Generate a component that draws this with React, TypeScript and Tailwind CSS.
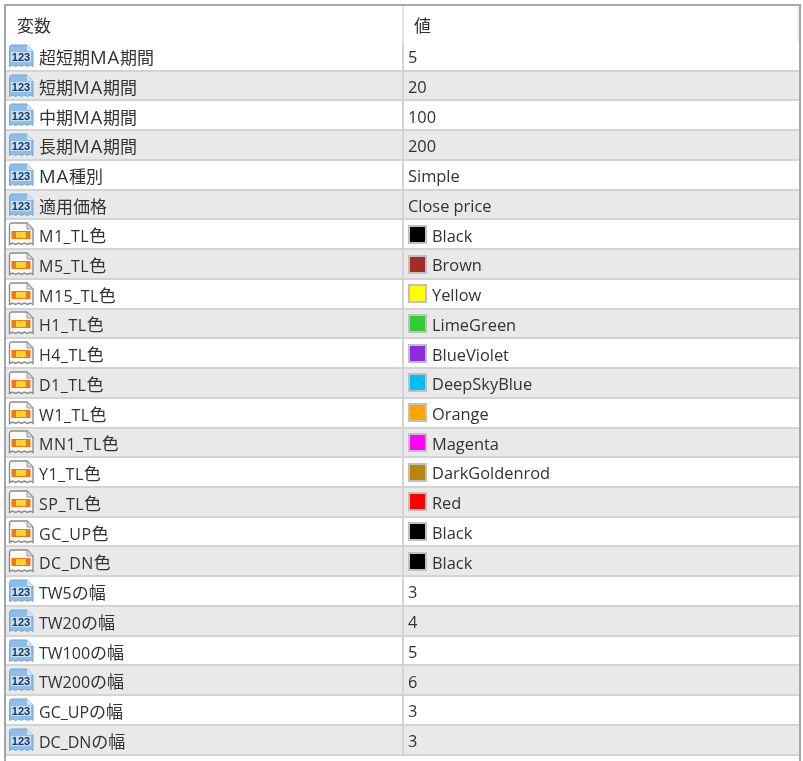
const FONT = "font-['Open_Sans','Noto_Sans_CJK_JP',sans-serif]";

type Row = { name: string; value: string; kind: "num" | "color"; swatch?: string };

const rows: Row[] = [
  { name: "超短期MA期間", value: "5", kind: "num" },
  { name: "短期MA期間", value: "20", kind: "num" },
  { name: "中期MA期間", value: "100", kind: "num" },
  { name: "長期MA期間", value: "200", kind: "num" },
  { name: "MA種別", value: "Simple", kind: "num" },
  { name: "適用価格", value: "Close price", kind: "num" },
  { name: "M1_TL色", value: "Black", kind: "color", swatch: "bg-[#000000]" },
  { name: "M5_TL色", value: "Brown", kind: "color", swatch: "bg-[#a52a2a]" },
  { name: "M15_TL色", value: "Yellow", kind: "color", swatch: "bg-[#ffff00]" },
  { name: "H1_TL色", value: "LimeGreen", kind: "color", swatch: "bg-[#32cd32]" },
  { name: "H4_TL色", value: "BlueViolet", kind: "color", swatch: "bg-[#8a2be2]" },
  { name: "D1_TL色", value: "DeepSkyBlue", kind: "color", swatch: "bg-[#00bfff]" },
  { name: "W1_TL色", value: "Orange", kind: "color", swatch: "bg-[#ffa500]" },
  { name: "MN1_TL色", value: "Magenta", kind: "color", swatch: "bg-[#ff00ff]" },
  { name: "Y1_TL色", value: "DarkGoldenrod", kind: "color", swatch: "bg-[#b8860b]" },
  { name: "SP_TL色", value: "Red", kind: "color", swatch: "bg-[#ff0000]" },
  { name: "GC_UP色", value: "Black", kind: "color", swatch: "bg-[#000000]" },
  { name: "DC_DN色", value: "Black", kind: "color", swatch: "bg-[#000000]" },
  { name: "TW5の幅", value: "3", kind: "num" },
  { name: "TW20の幅", value: "4", kind: "num" },
  { name: "TW100の幅", value: "5", kind: "num" },
  { name: "TW200の幅", value: "6", kind: "num" },
  { name: "GC_UPの幅", value: "3", kind: "num" },
  { name: "DC_DNの幅", value: "3", kind: "num" },
];

// CJK runs sit a little larger than the latin text in the reference,
// and the latin runs are not all equally wide there
function latinClass(part: string, whole: string) {
  if (part === "MA") return "text-[18.5px] tracking-[0.8px]";
  if (whole.endsWith("色")) return "tracking-[0.5px]";
  return "";
}

function Name({ text }: { text: string }) {
  const parts = text.match(/[A-Za-z0-9_]+|[^A-Za-z0-9_]+/g) ?? [];
  return (
    <span className="pt-[3px] text-[16px] leading-none whitespace-nowrap text-[#333333]">
      {parts.map((part, i) =>
        /^[A-Za-z0-9_]/.test(part) ? (
          <span key={i} className={latinClass(part, text)}>
            {part}
          </span>
        ) : (
          <span key={i} className="text-[17px]">
            {part}
          </span>
        ),
      )}
    </span>
  );
}

function NumIcon() {
  return (
    <svg width="26" height="24" viewBox="0 0 26 24" className="shrink-0">
      <path
        d="M1.5 3.5C1.5 2 2.5 1 4 1H19l6 6v15.5l-2.5-1.5-3 1.5-3-1.5-3 1.5-3-1.5-3 1.5-3-1.5-3 1.5z"
        fill="#8fbde8"
        stroke="#74a6d8"
        strokeWidth="1"
      />
      <path d="M19 1v6h6z" fill="#d5e6f6" />
      <rect x="3" y="8" width="20" height="10" fill="#c9def3" />
      <text x="13" y="17" textAnchor="middle" fontFamily="'Liberation Sans', sans-serif" fontSize="11" fontWeight="700" fill="#17365d">
        123
      </text>
    </svg>
  );
}

function ColorIcon() {
  return (
    <svg width="26" height="24" viewBox="0 0 26 24" className="shrink-0">
      <path
        d="M1.5 3C1.5 2 2.5 1 3.5 1H19l6 6v15.5l-2.5-1.5-3 1.5-3-1.5-3 1.5-3-1.5-3 1.5-3-1.5-3 1.5z"
        fill="#fbfbfb"
        stroke="#8c8c8c"
        strokeWidth="1.4"
      />
      <path d="M19 1v6h6z" fill="#dcdcdc" stroke="#8c8c8c" strokeWidth="0.8" />
      <rect x="3.5" y="9" width="19" height="8" fill="#f5780f" />
      <rect x="8" y="10" width="10" height="6" fill="#fdd32e" />
    </svg>
  );
}

function TableRow({ row, index }: { row: Row; index: number }) {
  const bg = index % 2 === 0 ? "bg-white" : "bg-[#e9e9e9]";
  return (
    <div className={`flex h-[29.74px] items-center border-b-2 border-[#d4d4d4] ${bg}`}>
      <div className="flex h-full w-[396px] items-center pl-[2px]">
        {row.kind === "num" ? <NumIcon /> : <ColorIcon />}
        <div className="ml-[5px] flex">
          <Name text={row.name} />
        </div>
      </div>
      <div className="flex h-full items-center border-l-2 border-[#d4d4d4] pl-1">
        {row.swatch && <span className={`mr-[5px] h-[19px] w-[19px] border-2 border-[#c0c0c0] ${row.swatch}`} />}
        <span className="pt-[3px] text-[16.4px] leading-none whitespace-nowrap text-[#333333]">{row.value}</span>
      </div>
    </div>
  );
}

export default function App() {
  return (
    <div className={`h-[761px] w-[803px] overflow-hidden bg-white pt-1 pr-[2px] pl-1 blur-[0.35px] ${FONT}`}>
      <div className="h-full border-t-2 border-r-2 border-l-2 border-[#a3a7ab]">
        <div className="flex h-[36px] border-r-2 border-[#eeeeee] bg-white">
          <div className="flex w-[396px] items-center pt-[3px] pl-[11px] text-[17px] text-[#333333]">変数</div>
          <div className="flex items-center border-l-2 border-[#e6e6e6] pt-[3px] pl-[10px] text-[17px] text-[#333333]">値</div>
        </div>
        {rows.map((row, i) => (
          <TableRow key={row.name} row={row} index={i} />
        ))}
      </div>
    </div>
  );
}
